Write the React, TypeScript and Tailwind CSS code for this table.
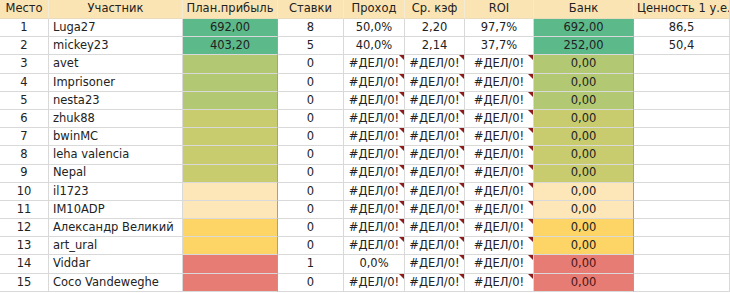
import type { ReactNode } from "react";

type Row = {
  place: number;
  name: string;
  plan: string;
  bets: string;
  pass: string;
  coef: string;
  roi: string;
  bank: string;
  value: string;
  color: string;
};

const ERR = "#ДЕЛ/0!";

const GREEN = "bg-[#5cb98a]";
const LGREEN = "bg-[#b2c873]";
const OLIVE = "bg-[#c8cb6e]";
const PEACH = "bg-[#fde6b8]";
const YELLOW = "bg-[#fdd466]";
const RED = "bg-[#e77c74] text-[#4a1515]";

const rows: Row[] = [
  { place: 1, name: "Luga27", plan: "692,00", bets: "8", pass: "50,0%", coef: "2,20", roi: "97,7%", bank: "692,00", value: "86,5", color: GREEN },
  { place: 2, name: "mickey23", plan: "403,20", bets: "5", pass: "40,0%", coef: "2,14", roi: "37,7%", bank: "252,00", value: "50,4", color: GREEN },
  { place: 3, name: "avet", plan: "", bets: "0", pass: ERR, coef: ERR, roi: ERR, bank: "0,00", value: "", color: LGREEN },
  { place: 4, name: "Imprisoner", plan: "", bets: "0", pass: ERR, coef: ERR, roi: ERR, bank: "0,00", value: "", color: LGREEN },
  { place: 5, name: "nesta23", plan: "", bets: "0", pass: ERR, coef: ERR, roi: ERR, bank: "0,00", value: "", color: LGREEN },
  { place: 6, name: "zhuk88", plan: "", bets: "0", pass: ERR, coef: ERR, roi: ERR, bank: "0,00", value: "", color: OLIVE },
  { place: 7, name: "bwinMC", plan: "", bets: "0", pass: ERR, coef: ERR, roi: ERR, bank: "0,00", value: "", color: OLIVE },
  { place: 8, name: "leha valencia", plan: "", bets: "0", pass: ERR, coef: ERR, roi: ERR, bank: "0,00", value: "", color: OLIVE },
  { place: 9, name: "Nepal", plan: "", bets: "0", pass: ERR, coef: ERR, roi: ERR, bank: "0,00", value: "", color: OLIVE },
  { place: 10, name: "il1723", plan: "", bets: "0", pass: ERR, coef: ERR, roi: ERR, bank: "0,00", value: "", color: PEACH },
  { place: 11, name: "IM10ADP", plan: "", bets: "0", pass: ERR, coef: ERR, roi: ERR, bank: "0,00", value: "", color: PEACH },
  { place: 12, name: "Александр Великий", plan: "", bets: "0", pass: ERR, coef: ERR, roi: ERR, bank: "0,00", value: "", color: YELLOW },
  { place: 13, name: "art_ural", plan: "", bets: "0", pass: ERR, coef: ERR, roi: ERR, bank: "0,00", value: "", color: YELLOW },
  { place: 14, name: "Viddar", plan: "", bets: "1", pass: "0,0%", coef: ERR, roi: ERR, bank: "0,00", value: "", color: RED },
  { place: 15, name: "Coco Vandeweghe", plan: "", bets: "0", pass: ERR, coef: ERR, roi: ERR, bank: "0,00", value: "", color: RED },
];

const cols = "grid-cols-[49px_134px_95px_66px_61px_60px_69px_100px_96px]";

function Cell({ children, className = "", marked = false }: { children?: ReactNode; className?: string; marked?: boolean }) {
  return (
    <div className={`relative flex items-center justify-center overflow-hidden whitespace-nowrap border-r border-b border-[#d9d9d9] ${className}`}>
      {children}
      {marked && (
        <span className="absolute top-0 right-0 h-0 w-0 border-t-[5px] border-l-[5px] border-t-[#8e1b1b] border-l-transparent" />
      )}
    </div>
  );
}

export default function App() {
  const headers = ["Место", "Участник", "План.прибыль", "Ставки", "Проход", "Ср. кэф", "ROI", "Банк"];
  return (
    <div className="h-[293px] w-[730px] overflow-hidden bg-white text-[11.5px] text-[#222] [font-family:'DejaVu_Sans',Verdana,sans-serif]">
      <div className={`grid ${cols} h-[19px]`}>
        {headers.map((h) => (
          <Cell key={h} className="bg-[#fbe4b4] border-r-[#f3ead6] border-b-[#e9dcbc]">{h}</Cell>
        ))}
        <Cell className="justify-start bg-[#fbe4b4] border-b-[#e9dcbc] pl-[3px]">Ценность 1 у.е.</Cell>
      </div>
      {rows.map((r) => (
        <div key={r.place} className={`grid ${cols} h-[18.2px]`}>
          <Cell>{r.place}</Cell>
          <Cell className="justify-start pl-[4px]">{r.name}</Cell>
          <Cell className={`${r.color} border-r-[#a0a0a0]`}>{r.plan}</Cell>
          <Cell>{r.bets}</Cell>
          <Cell marked={r.pass === ERR}>{r.pass}</Cell>
          <Cell marked={r.coef === ERR}>{r.coef}</Cell>
          <Cell marked={r.roi === ERR}>{r.roi}</Cell>
          <Cell className={`${r.color} border-r-[#a0a0a0]`}>{r.bank}</Cell>
          <Cell>{r.value}</Cell>
        </div>
      ))}
    </div>
  );
}
